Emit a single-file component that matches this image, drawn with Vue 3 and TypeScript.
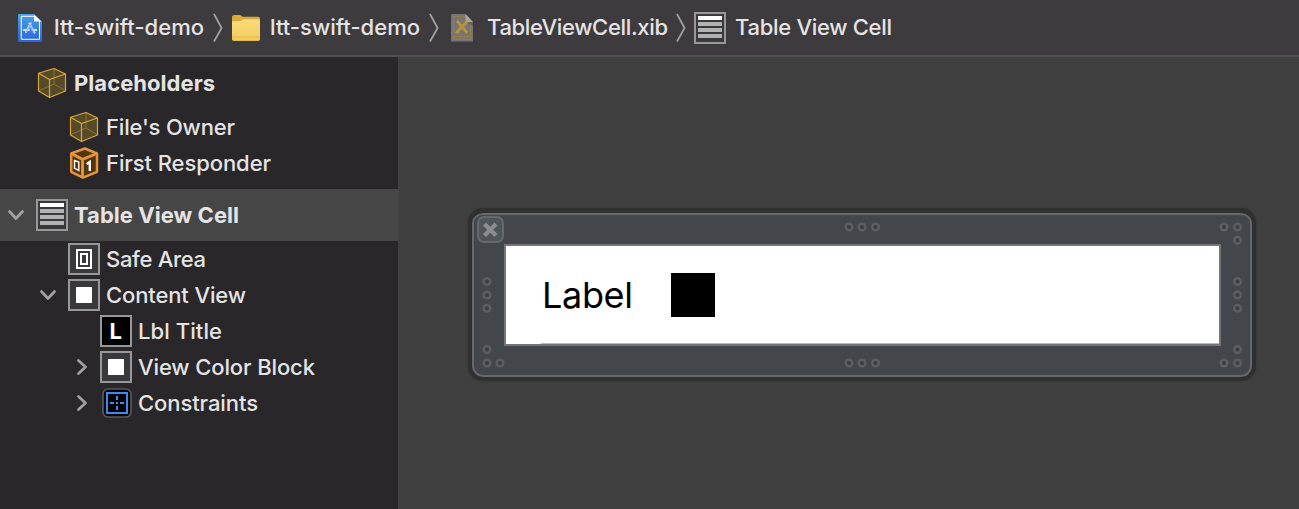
<script setup lang="ts">
interface Crumb { label: string; icon: string; width: number }
interface Row { label: string; icon: string; depth: number; width: number; arrow?: 'open' | 'closed'; group?: boolean; selected?: boolean }

const crumbs: Crumb[] = [
  { label: 'ltt-swift-demo', icon: 'project', width: 150 },
  { label: 'ltt-swift-demo', icon: 'folder', width: 150 },
  { label: 'TableViewCell.xib', icon: 'xib', width: 181 },
  { label: 'Table View Cell', icon: 'cell', width: 157 },
]

const rows: Row[] = [
  { label: 'Placeholders', icon: 'cube', depth: 0, width: 141, group: true },
  { label: "File's Owner", icon: 'cube', depth: 1, width: 129 },
  { label: 'First Responder', icon: 'responder', depth: 1, width: 165 },
  { label: 'Table View Cell', icon: 'cell', depth: 0, width: 165, arrow: 'open', group: true, selected: true },
  { label: 'Safe Area', icon: 'safe', depth: 1, width: 100 },
  { label: 'Content View', icon: 'view', depth: 1, width: 140, arrow: 'open' },
  { label: 'Lbl Title', icon: 'label', depth: 2, width: 84 },
  { label: 'View Color Block', icon: 'view', depth: 2, width: 177, arrow: 'closed' },
  { label: 'Constraints', icon: 'constraints', depth: 2, width: 120, arrow: 'closed' },
]

const handles: [number, number][] = [
  [381, 19], [394, 19], [407.5, 19], [756, 19], [769.5, 19], [769.5, 32.3],
  [19, 73.5], [19, 87], [19, 100.3], [769.5, 73.5], [769.5, 87], [769.5, 100.3],
  [19, 141.6], [19, 155], [32, 155], [381, 155], [394, 155], [407.5, 155],
  [769.5, 141.6], [756, 155], [769.5, 155],
]
</script>

<template>
  <div class="window">
    <svg class="defs" aria-hidden="true">
      <defs>
        <linearGradient id="blue" x1="0" y1="0" x2="0" y2="1"><stop offset="0" stop-color="#4aa3e2" /><stop offset="1" stop-color="#2c63dc" /></linearGradient>
        <linearGradient id="gold" x1="0" y1="0" x2="0" y2="1"><stop offset="0" stop-color="#fadc7b" /><stop offset="1" stop-color="#f3cb5c" /></linearGradient>
        <symbol id="project" viewBox="0 0 32 32">
          <path d="M2 2H17L25 9.5V29a1 1 0 0 1-1 1H2a1 1 0 0 1-1-1V3a1 1 0 0 1 1-1Z" fill="url(#blue)" />
          <path d="M17 4.3H4.3V27.3H22.5V9" fill="none" stroke="#fff" stroke-width="1" />
          <path d="M17 2.5V9.5H24.5Z" fill="#f5f7fa" />
          <path d="M13.6 11.5L9 20M12.3 11.5L17.5 20.6M6.8 18H12M15.5 18H19.3" stroke="#c8e4ff" stroke-width="2" stroke-linecap="round" fill="none" />
          <path d="M13.4 12.5L9.3 20M12.6 12.5L17.2 20.3" stroke="#3579d8" stroke-width=".5" />
        </symbol>
        <symbol id="folder" viewBox="0 0 32 32">
          <path d="M2 5.2C2 3.7 3 3 4.4 3H9c1.2 0 1.8.3 2.6 1l1 .8H28q2 0 2 2V27q0 2-2 2H4q-2 0-2-2Z" fill="#d9a93a" />
          <path d="M2 9.2H9.5c1.2 0 1.6-.3 2.5-1.1.8-.7 1.3-.9 2.5-.9H28q2 0 2 2V26.5q0 2-2 2H4q-2 0-2-2Z" fill="url(#gold)" />
          <path d="M2 25H30" stroke="#e4b851" stroke-width=".8" />
        </symbol>
        <symbol id="xib" viewBox="0 0 32 32">
          <path d="M2 2H15.5L23 10V29.5H1V3a1 1 0 0 1 1-1Z" fill="#767574" />
          <path d="M15 4.3H3.3V24.5H20.7V10M3.3 24.5V27.4H20.7V24.5" fill="none" stroke="#9d8146" stroke-width=".9" />
          <path d="M15.5 2V10H23Z" fill="#a7a6a6" /><path d="M15.5 10H23V14Z" fill="#626162" />
          <path d="M7 9L17.2 20.8M17.5 9.3L6.5 20.5" stroke="#b9933b" stroke-width="2.9" />
          <path d="M5.2 20.6h4.2" stroke="#b9933b" stroke-width="1.4" />
        </symbol>
        <symbol id="cell" viewBox="0 0 32 32">
          <path d="M1 1H31V31H1Z" fill="#39393b" stroke="#98989a" stroke-width="2" />
          <path d="M4 4H28V8H4Z" fill="#fff" /><path d="M4 10H28V14H4ZM4 16H28V20H4ZM4 22H28V26H4Z" fill="#b2b2b3" />
        </symbol>
        <symbol id="cube" viewBox="0 0 32 32">
          <path d="M2.5 6.3L18 1.5L29.5 7V24L13.5 30.5L2.5 24Z" fill="#554b29" />
          <path d="M18 2V17L29 23.5M18 17L3 23.5" fill="none" stroke="#8e7330" stroke-width="1" />
          <path d="M2.5 6.3L18 1.5L29.5 7V24L13.5 30.5L2.5 24ZM2.5 6.3L13.5 12.5L29.5 7M13.5 12.5V30.5" fill="none" stroke="#d8a63c" stroke-width="1.2" stroke-linejoin="round" />
        </symbol>
        <symbol id="responder" viewBox="0 0 32 32">
          <path d="M3.2 6.4L17 1.5L29 6.5V24.8L15 30.7L3.2 24.8Z" fill="#513510" stroke="#e2953a" stroke-width="2.5" stroke-linejoin="round" />
          <path d="M3.2 6.4L14.5 12.3L29 6.5M14.5 12.3V30" fill="none" stroke="#e2953a" stroke-width="2.9" />
          <path d="M6.5 13.5L10.8 15V23.5L6.5 21.2Z" fill="none" stroke="#fff" stroke-width="1.4" />
          <path d="M18.7 17L21.8 15V24" fill="none" stroke="#fff" stroke-width="2.4" />
        </symbol>
        <symbol id="safe" viewBox="0 0 32 32">
          <path d="M1 1H31V31H1Z" fill="#39393b" stroke="#98989a" stroke-width="2" />
          <path d="M9 7H23V25H9ZM13 11H19V21H13Z" fill="none" stroke="#fff" stroke-width="2" />
        </symbol>
        <symbol id="view" viewBox="0 0 32 32">
          <path d="M1 1H31V31H1Z" fill="#39393b" stroke="#98989a" stroke-width="2" /><path d="M8 8H24V24H8Z" fill="#fff" />
        </symbol>
        <symbol id="label" viewBox="0 0 32 32">
          <path d="M1 1H31V31H1Z" fill="#000" stroke="#98989a" stroke-width="2" />
          <text x="9.5" y="24" class="glyph">L</text>
        </symbol>
        <symbol id="constraints" viewBox="0 0 32 32">
          <rect x="3" y="2" width="28" height="28" rx="5" fill="#050505" stroke="#58585a" stroke-width="1.7" />
          <path d="M7 6H27V26H7Z" fill="#000" stroke="#3f86f7" stroke-width="2" />
          <path d="M17 9V13M17 19V23M10 16H14M20 16H24M16 16H18" stroke="#3f86f7" stroke-width="2" />
        </symbol>
      </defs>
    </svg>

    <header class="path">
      <template v-for="(c, i) in crumbs" :key="i">
        <svg v-if="i" class="separator" viewBox="0 0 10 30"><path d="M1 1L8.6 15L1 28.5" /></svg>
        <span :class="['crumb', 'crumb-' + c.icon]">
          <svg class="icon"><use :href="'#' + c.icon" /></svg>
          <svg class="caption" :style="{ width: c.width + 4 + 'px' }"><text x="0" y="23" :textLength="c.width">{{ c.label }}</text></svg>
        </span>
      </template>
    </header>

    <div class="body">
      <aside class="outline">
        <div v-for="(r, i) in rows" :key="i" :class="['row', 'depth-' + r.depth, { group: r.group, selected: r.selected }]">
          <span class="disclosure">
            <svg v-if="r.arrow" :class="r.arrow" viewBox="0 0 20 20"><path d="M3.5 6.5L10 13.5L16.5 6.5" /></svg>
          </span>
          <svg class="icon"><use :href="'#' + r.icon" /></svg>
          <svg class="caption" :style="{ width: r.width + 4 + 'px' }"><text x="0" y="24" :textLength="r.width">{{ r.label }}</text></svg>
        </div>
      </aside>

      <main class="canvas">
        <section class="frame">
          <div class="table-cell">
            <svg class="title"><text x="0" y="35" textLength="91">Label</text></svg>
            <div class="block"></div>
            <div class="divider"></div>
          </div>
          <svg class="handles" viewBox="0 0 788 173">
            <circle v-for="(h, i) in handles" :key="i" :cx="h[0]" :cy="h[1]" r="3.3" />
            <rect x="10" y="9" width="25" height="25" rx="6" />
            <path d="M16.5 16L28 27.5M28 16L16.5 27.5" />
          </svg>
        </section>
      </main>
    </div>
  </div>
</template>

<style>
html, body { margin: 0; background: #404040; overflow: hidden; }
</style>

<style scoped>
.window { width: 1299px; height: 509px; display: flex; flex-direction: column; font-family: Inter, "Liberation Sans", sans-serif; }
.defs { position: absolute; width: 0; height: 0; }
.glyph { font: 700 22px Inter, sans-serif; fill: #fff; }
.path { box-sizing: border-box; height: 57px; flex: none; display: flex; align-items: center; padding-left: 17px; background: #3e3b3e; border-bottom: 2px solid #525053; }
.crumb { display: flex; align-items: center; height: 32px; flex: none; }
.icon { width: 32px; height: 32px; flex: none; display: block; }
.caption { height: 32px; flex: none; display: block; overflow: visible; }
.caption text { font-size: 22px; font-weight: 450; fill: #e5e4e5; }
.path .caption { margin-left: 5px; }
.path .crumb-folder .caption { margin-left: 8px; }
.path .crumb-cell .caption { margin-left: 9px; }
.crumb-project, .crumb-folder { margin-right: 5px; }
.crumb-xib { margin: 0 4px 0 4px; }
.crumb-cell { margin-left: 1px; }
.separator { width: 10px; height: 30px; flex: none; margin-right: 7px; }
.separator path { fill: none; stroke: #a4a3a4; stroke-width: 1.7; }
.body { display: flex; flex: 1; min-height: 0; }
.outline { width: 398px; background: #29272a; flex: none; }
.row { display: flex; align-items: center; height: 36px; }
.row.group { height: 52px; }
.row.selected { margin-top: 8px; background: #464646; }
.depth-1 { padding-left: 32px; }
.depth-2 { padding-left: 64px; }
.disclosure { width: 36px; height: 20px; flex: none; }
.disclosure svg { display: block; width: 20px; height: 20px; margin-left: 6px; }
.depth-2 .disclosure svg { margin-left: 8px; }
.disclosure .closed { transform: rotate(-90deg); }
.disclosure path { fill: none; stroke: #a09fa1; stroke-width: 2.8; stroke-linecap: round; stroke-linejoin: round; }
.row .caption { margin-left: 6px; }
.row.group .caption text { font-weight: 700; }
.canvas { flex: 1; background: #404040; padding: 151px 0 0 70px; }
.frame { box-sizing: border-box; position: relative; width: 788px; height: 173px; border: 4px solid #303030; border-top-width: 5px; border-radius: 15px; background: #43474b; box-shadow: 0 0 2px #303030, inset 0 0 0 2px #66686a; padding: 31px 0 0 32px; }
.table-cell { box-sizing: border-box; position: relative; width: 717px; height: 102px; border: 2px solid #737577; background: #fff; display: flex; align-items: flex-start; padding: 27px 0 0 36px; }
.title { width: 100px; height: 44px; overflow: visible; flex: none; }
.title text { font-size: 36px; font-weight: 400; fill: #000; }
.block { width: 44px; height: 44px; background: #000; margin-left: 29px; }
.divider { position: absolute; left: 35px; right: 0; bottom: 0; height: 1px; background: #b9b9ba; }
.handles { position: absolute; left: -4px; top: -5px; width: 788px; height: 173px; }
.handles circle { fill: #3a3d40; stroke: #5b5f62; stroke-width: 2.5; }
.handles rect { fill: #50555a; stroke: #65696c; stroke-width: 2; }
.handles path { stroke: #8a8e91; stroke-width: 4.2; }
</style>
